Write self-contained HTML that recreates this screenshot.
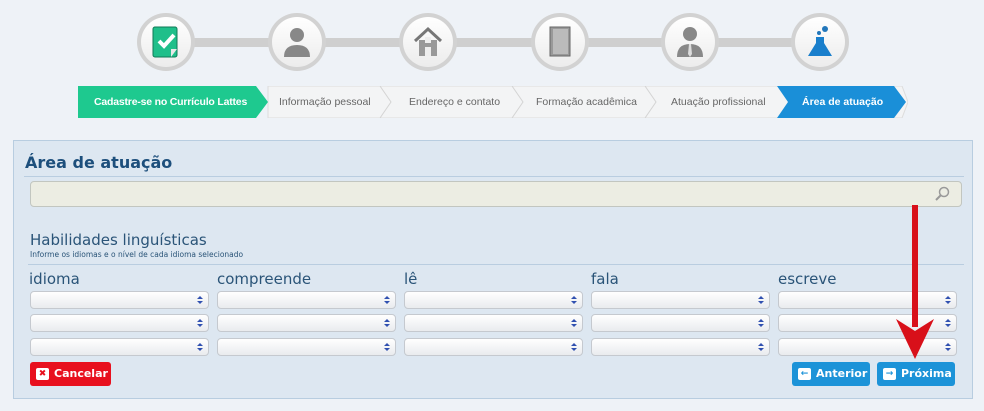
<!DOCTYPE html>
<html><head><meta charset="utf-8"><style>
*{margin:0;padding:0;box-sizing:border-box}
body{width:984px;height:411px;background:#eef2f7;font-family:"DejaVu Sans","Liberation Sans",sans-serif;position:relative;overflow:hidden}
.a{position:absolute}
.bar{left:166px;top:38px;width:654px;height:9px;background:#cfcfcf}
.c{width:58px;height:58px;border-radius:50%;background:#d2d2d2;top:13px}
.c i{position:absolute;left:4px;top:4px;width:50px;height:50px;border-radius:50%;background:linear-gradient(#fff,#ececec);display:block}
.c svg{position:absolute;left:14px;top:12px}
.crumb{top:86px;height:32px;font-size:10.5px;color:#666;line-height:32px;font-family:"Liberation Sans",sans-serif}
.panel{left:13px;top:140px;width:960px;height:259px;background:#dde7f1;border:1px solid #b8cde0}
.sel{height:18px;border:1px solid #c5c9cf;border-radius:4px;background:linear-gradient(#fff,#e9ebee);width:179px}
.sel:after{content:"";position:absolute;right:5px;top:4px;width:0;height:0;border:3px solid transparent;border-bottom:3px solid #3050b0;border-top:0}
.sel:before{content:"";position:absolute;right:5px;top:9px;width:0;height:0;border:3px solid transparent;border-top:3px solid #3050b0;border-bottom:0}
.lbl{font-size:15px;color:#2a5478;top:270px}
.btn{height:24px;border-radius:3px;color:#fff;font-size:11px;font-weight:bold;line-height:24px}
.btn b{position:absolute;left:6px;top:6px;width:13px;height:12px;background:#fff;border-radius:2px;font-size:9px;line-height:12px;text-align:center}
</style></head><body>
<div class="a bar"></div>
<div class="a c" style="left:137px"><i></i><svg width="30" height="34"><rect x="2" y="2" width="24" height="30" rx="2" fill="#1fbf8a" stroke="#0f7a56"/><path d="M8 16l5 5 10-11" stroke="#fff" stroke-width="4" fill="none"/><path d="M20 24l6 0-6 8z" fill="#e8e8e8"/></svg></div>
<div class="a c" style="left:268px"><i></i><svg width="30" height="34"><circle cx="15" cy="10" r="7" fill="#888"/><path d="M2 32q0-12 13-12t13 12z" fill="#888"/></svg></div>
<div class="a c" style="left:399px"><i></i><svg width="30" height="34"><path d="M2 16L15 4 28 16" stroke="#777" stroke-width="3" fill="none"/><rect x="6" y="15" width="18" height="16" fill="#999"/><rect x="12" y="12" width="6" height="6" fill="#eee"/><rect x="12" y="22" width="6" height="9" fill="#eee"/></svg></div>
<div class="a c" style="left:531px"><i></i><svg width="30" height="34"><rect x="5" y="2" width="20" height="29" fill="#999" stroke="#666"/><rect x="8" y="4" width="15" height="25" fill="#bbb"/></svg></div>
<div class="a c" style="left:661px"><i></i><svg width="30" height="34"><circle cx="15" cy="9" r="7" fill="#888"/><path d="M2 32q0-13 13-13t13 13z" fill="#888"/><path d="M14 19h2l1 10-2 3-2-3z" fill="#ddd"/></svg></div>
<div class="a c" style="left:791px"><i></i><svg width="30" height="34"><circle cx="20" cy="4" r="3" fill="#2277bb"/><circle cx="14" cy="8" r="2" fill="#2277bb"/><path d="M11 12h8v6l8 13H3l8-13z" fill="#1a7fcc"/></svg></div>

<svg class="a" style="left:78px;top:86px" width="830" height="32">
<polygon points="190,0 824,0 830,16 824,32 190,32" fill="#f3f4f5" stroke="#dcdcdc"/>
<polyline points="302,0 313,16 302,32" fill="none" stroke="#d4d4d4"/>
<polyline points="434,0 445,16 434,32" fill="none" stroke="#d4d4d4"/>
<polyline points="567,0 578,16 567,32" fill="none" stroke="#d4d4d4"/>
<polygon points="0,0 178,0 190,16 178,32 0,32" fill="#1ec98f"/>
<polygon points="699,0 816,0 828,16 816,32 699,32 710,16" fill="#1a8fd8"/>
</svg>
<div class="a crumb" style="left:94px;color:#fff;font-weight:bold;letter-spacing:-0.2px">Cadastre-se no Currículo Lattes</div>
<div class="a crumb" style="left:279px">Informação pessoal</div>
<div class="a crumb" style="left:409px">Endereço e contato</div>
<div class="a crumb" style="left:536px">Formação acadêmica</div>
<div class="a crumb" style="left:671px">Atuação profissional</div>
<div class="a crumb" style="left:802px;color:#fff;font-weight:bold">Área de atuação</div>

<div class="a panel"></div>
<div class="a" style="left:25px;top:153px;font-size:16px;font-weight:bold;color:#1d4f7c">Área de atuação</div>
<div class="a" style="left:24px;top:176px;width:940px;height:1px;background:#b9cde0"></div>
<div class="a" style="left:30px;top:181px;width:932px;height:26px;background:#ecede3;border:1px solid #c2c6c0;border-radius:4px"></div>
<svg class="a" style="left:934px;top:186px" width="18" height="16"><circle cx="10" cy="6" r="4.5" fill="none" stroke="#999" stroke-width="1.5"/><path d="M7 9l-5 5" stroke="#999" stroke-width="2"/></svg>
<div class="a" style="left:30px;top:231px;font-size:15px;color:#2a5478">Habilidades linguísticas</div>
<div class="a" style="left:30px;top:250px;font-size:7.5px;color:#2a5478">Informe os idiomas e o nível de cada idioma selecionado</div>
<div class="a" style="left:28px;top:264px;width:936px;height:1px;background:#b9cde0"></div>
<div class="a lbl" style="left:29px">idioma</div>
<div class="a lbl" style="left:217px">compreende</div>
<div class="a lbl" style="left:404px">lê</div>
<div class="a lbl" style="left:591px">fala</div>
<div class="a lbl" style="left:778px">escreve</div>
<div class="a sel" style="left:30px;top:291px"></div><div class="a sel" style="left:217px;top:291px"></div><div class="a sel" style="left:404px;top:291px"></div><div class="a sel" style="left:591px;top:291px"></div><div class="a sel" style="left:778px;top:291px"></div>
<div class="a sel" style="left:30px;top:314px"></div><div class="a sel" style="left:217px;top:314px"></div><div class="a sel" style="left:404px;top:314px"></div><div class="a sel" style="left:591px;top:314px"></div><div class="a sel" style="left:778px;top:314px"></div>
<div class="a sel" style="left:30px;top:338px"></div><div class="a sel" style="left:217px;top:338px"></div><div class="a sel" style="left:404px;top:338px"></div><div class="a sel" style="left:591px;top:338px"></div><div class="a sel" style="left:778px;top:338px"></div>
<div class="a btn" style="left:30px;top:362px;width:81px;background:#e8101e;padding-left:24px"><b style="color:#e8101e">✖</b>Cancelar</div>
<div class="a btn" style="left:792px;top:362px;width:78px;background:#1c93d8;padding-left:24px"><b style="color:#1c93d8">←</b>Anterior</div>
<div class="a btn" style="left:877px;top:362px;width:78px;background:#1c93d8;padding-left:24px"><b style="color:#1c93d8">→</b>Próxima</div>
<svg class="a" style="left:893px;top:205px" width="44" height="155"><path d="M19 0h6v122h-6z" fill="#d8101a"/><path d="M3 114l19 40 19-40-19 12z" fill="#d8101a"/></svg>
</body></html>
